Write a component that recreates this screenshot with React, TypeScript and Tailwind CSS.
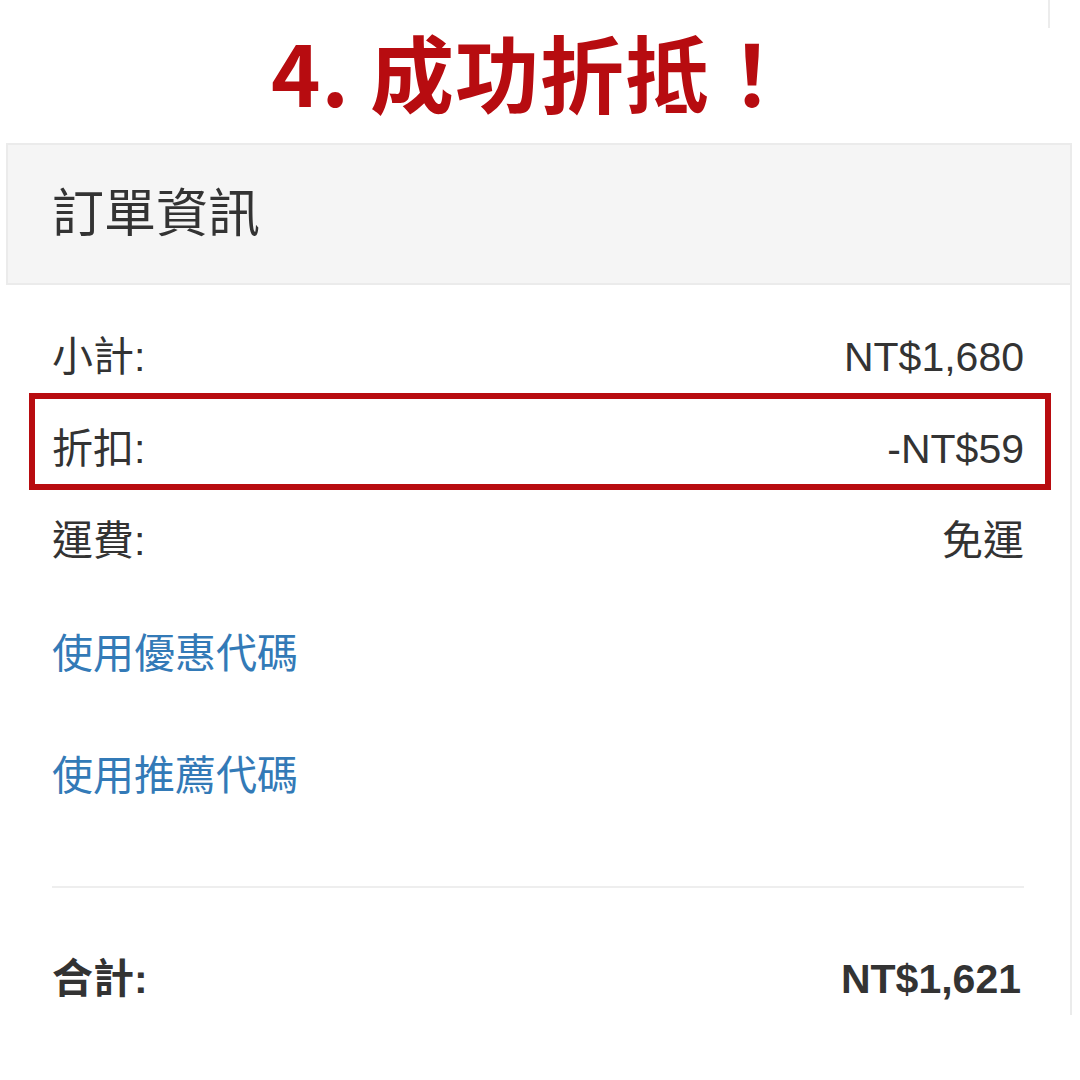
import React from 'react';

const FONT = { fontFamily: '"Liberation Sans", "Noto Sans CJK TC", sans-serif' };

const rows = [
  { label: '小計:', value: 'NT$1,680' },
  { label: '折扣:', value: '-NT$59' },
  { label: '運費:', value: '免運' },
];

export default function App() {
  return (
    <div className="relative w-[1080px] h-[1080px] bg-white overflow-hidden text-[#333]" style={FONT}>
      {/* cropped edge from the previous panel */}
      <div className="h-[28px] flex justify-end pr-[30px]">
        <div className="w-[2px] bg-[#ececec]"></div>
      </div>

      {/* step title */}
      <div className="h-[115px] flex items-center justify-center pr-[14px] pb-[30px]">
        <h1 className="text-[84px] leading-none font-bold text-[#b70c10] tracking-[1px]" style={{ fontFamily: '"Noto Sans CJK TC", sans-serif' }}>
          4. 成功折抵！
        </h1>
      </div>

      {/* order card */}
      <div className="ml-[6px] w-[1066px] border-t-2 border-r-2 border-[#ebebeb]">
        <div className="h-[140px] bg-[#f5f5f5] border-l-2 border-b-2 border-[#ebebeb] flex items-center px-[44px]">
          <span className="text-[52px] leading-none">訂單資訊</span>
        </div>

        <div className="pl-[46px] pr-[46px] pt-[27px] pb-[12px]">
          {rows.map((r) => (
            <div key={r.label} className="h-[92px] flex items-center justify-between text-[41px]">
              <span>{r.label}</span>
              <span>{r.value}</span>
            </div>
          ))}

          <div className="mt-[6px] h-[122px] flex items-center text-[41px] text-[#337ab7]">使用優惠代碼</div>
          <div className="h-[122px] flex items-center text-[41px] text-[#337ab7]">使用推薦代碼</div>

          <div className="mt-[48px] h-[2px] bg-[#eeeeee]"></div>

          <div className="mt-[69px] h-[46px] flex items-center justify-between text-[41px] font-bold pr-[3px]">
            <span>合計:</span>
            <span>NT$1,621</span>
          </div>
        </div>
      </div>

      {/* highlight around the discount row */}
      <div className="absolute left-[29px] top-[393px] w-[1022px] h-[97px] border-[6px] border-[#b80c10]"></div>
    </div>
  );
}
